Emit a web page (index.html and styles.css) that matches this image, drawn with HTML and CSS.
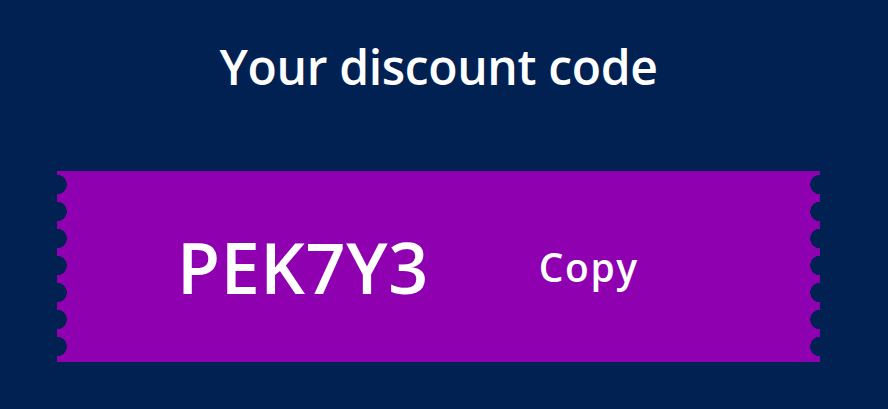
FILE: index.html
```html
<!DOCTYPE html>
<html lang="en">
<head>
    <meta charset="UTF-8">
    <meta name="viewport" content="width=device-width, initial-scale=1.0">
    <title>Discount code</title>
    <link rel="stylesheet" href="styles.css">
</head>
<body>
    <div class="page">
        <h1 class="title">Your discount code</h1>
        <!-- Ticket -->
        <div class="ticket">
            <span class="code">PEK7Y3</span>
            <button class="copy">Copy</button>
        </div>
    </div>
</body>
</html>
```

FILE: styles.css
```css
/* General Styles */
body {
    margin: 0;
    background-color: #002152;
    font-family: "Open Sans", sans-serif;
    color: #fff;
}

.page {
    padding: 34px 68px 0 57px;
}

.title {
    margin: 0;
    text-align: center;
    font-size: 48px;
    font-weight: 600;
    letter-spacing: -0.35px;
    line-height: 66px;
}

/* Ticket */
.ticket {
    position: relative;
    margin-top: 71px;
    height: 191px;
    background-color: #8e00b0;
    display: flex;
    align-items: center;
    padding-left: 120px;
    gap: 110px;
}

.ticket::before,
.ticket::after {
    content: '';
    position: absolute;
    top: 0;
    bottom: 0;
    width: 10px;
    background-size: 10px 27px;
    background-repeat: repeat-y;
}

.ticket::before {
    left: 0;
    background-image: radial-gradient(circle at 0 13.5px, #002152 9.5px, transparent 10px);
}

.ticket::after {
    right: 0;
    background-image: radial-gradient(circle at 10px 13.5px, #002152 9.5px, transparent 10px);
}

.code {
    font-size: 70px;
    font-weight: 600;
    letter-spacing: 0.6px;
}

.copy {
    font-family: inherit;
    font-size: 39px;
    font-weight: 600;
    letter-spacing: 1.5px;
    color: #fff;
    background: none;
    border: none;
    padding: 0;
    cursor: pointer;
}
```
